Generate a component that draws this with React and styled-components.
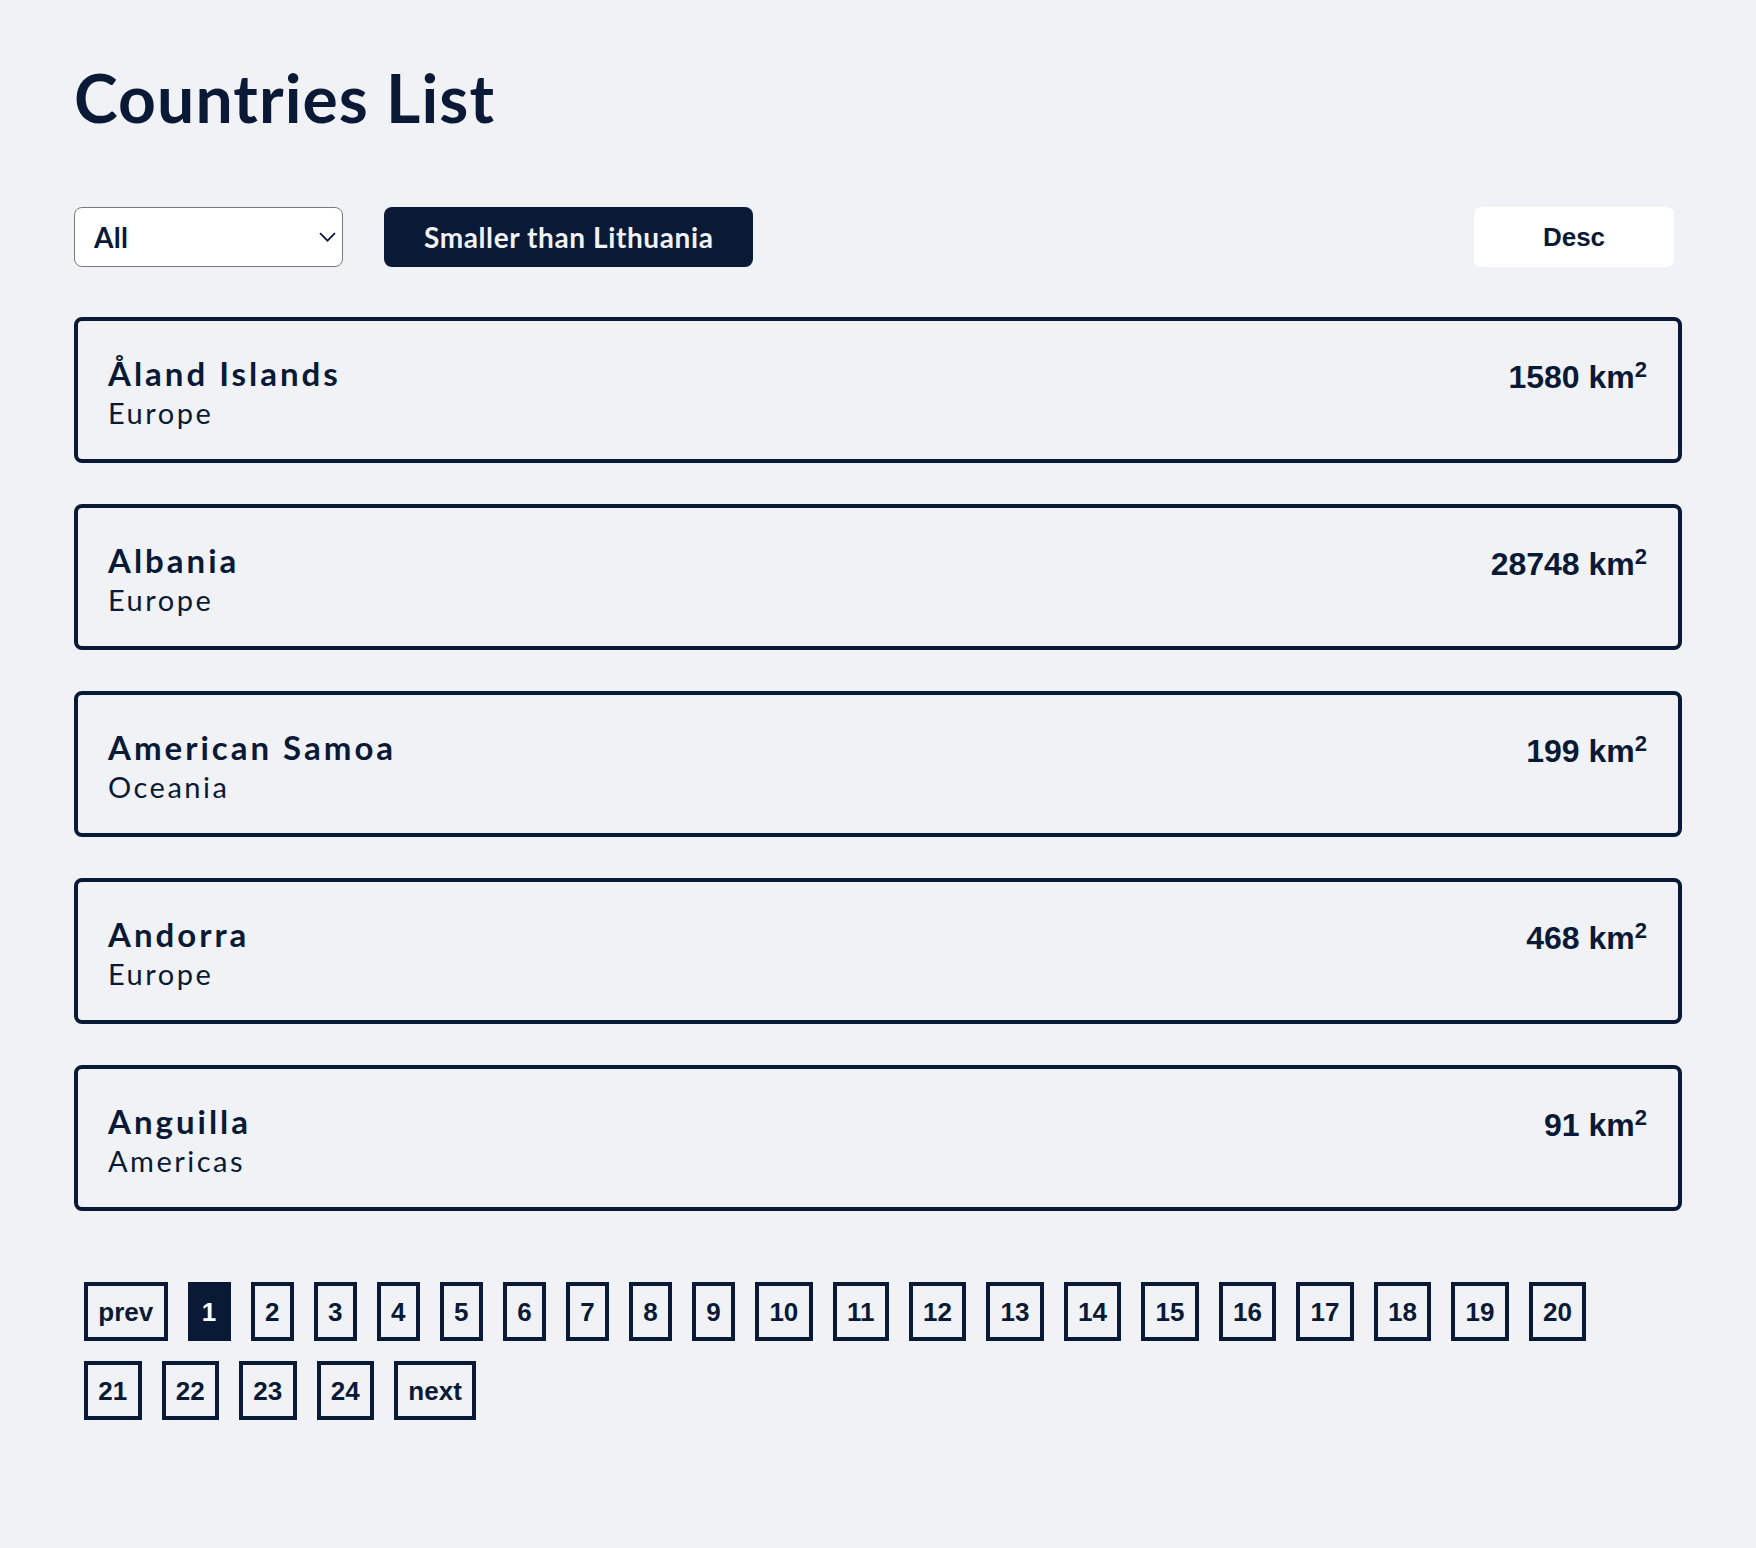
import React from "react";
import styled, { createGlobalStyle } from "styled-components";

const navy = "#0a1a36";
const bg = "#f0f2f5";

const GlobalStyle = createGlobalStyle`
  html, body {
    margin: 0;
    padding: 0;
    background: ${bg};
  }
  body {
    font-family: Lato, "Open Sans", sans-serif;
    color: ${navy};
  }
  * { box-sizing: border-box; }
`;

const Page = styled.main`
  padding: 58px 74px 80px;
`;

const Title = styled.h1`
  margin: 0 0 70px;
  font-family: Lato, sans-serif;
  font-weight: 700;
  font-size: 66px;
  line-height: 1.2;
  letter-spacing: 1.1px;
  color: ${navy};
`;

const Controls = styled.div`
  display: flex;
  align-items: center;
  gap: 41px;
  height: 60px;
  margin-bottom: 50px;
`;

const SelectWrap = styled.div`
  position: relative;
  width: 269px;
  height: 60px;
`;

const Select = styled.select`
  appearance: none;
  -webkit-appearance: none;
  width: 100%;
  height: 100%;
  border: 1.5px solid #7a7a7a;
  border-radius: 8px;
  background: #fff;
  padding: 0 40px 0 19px;
  font-family: Lato, sans-serif;
  font-weight: 700;
  font-size: 28px;
  letter-spacing: 0.3px;
  color: ${navy};
  outline: none;
`;

const Chevron = styled.svg`
  position: absolute;
  right: 7px;
  top: 25px;
  width: 17px;
  height: 10px;
  pointer-events: none;
`;

const PrimaryButton = styled.button`
  height: 60px;
  padding: 0 40px;
  border: none;
  border-radius: 8px;
  background: ${navy};
  color: #f0f2f5;
  font-family: Lato, sans-serif;
  font-weight: 700;
  font-size: 28px;
  letter-spacing: 0.6px;
  cursor: pointer;
`;

const SortButton = styled.button`
  margin-left: auto;
  margin-right: 8px;
  width: 200px;
  height: 60px;
  border: none;
  border-radius: 8px;
  background: #fff;
  color: ${navy};
  font-family: "Liberation Sans", Arial, sans-serif;
  font-weight: 700;
  font-size: 26px;
  cursor: pointer;
`;

const CardList = styled.ul`
  list-style: none;
  margin: 0;
  padding: 0;
  display: flex;
  flex-direction: column;
  gap: 41px;
`;

const Card = styled.li`
  display: flex;
  justify-content: space-between;
  align-items: flex-start;
  border: 4px solid ${navy};
  border-radius: 8px;
  padding: 32px 31px 26px 30px;
`;

const CardInfo = styled.div`
  display: flex;
  flex-direction: column;
`;

const Name = styled.span`
  font-family: Lato, sans-serif;
  font-weight: 700;
  font-size: 33px;
  line-height: 40px;
  letter-spacing: 3px;
`;

const Region = styled.span`
  font-family: Lato, sans-serif;
  font-weight: 400;
  font-size: 29px;
  line-height: 40px;
  letter-spacing: 2.5px;
`;

const Area = styled.span`
  margin-top: 4px;
  font-family: "Liberation Sans", Arial, sans-serif;
  font-weight: 700;
  font-size: 32px;
  line-height: 40px;
`;

const Sup = styled.sup`
  font-size: 22px;
  line-height: 0;
  vertical-align: 11px;
`;

const Pagination = styled.nav`
  display: flex;
  flex-wrap: wrap;
  gap: 20px;
  margin-top: 71px;
  padding: 0 40px 0 10px;
`;

const PageButton = styled.button`
  height: 59px;
  padding: 0 10.3px;
  border: 4px solid ${navy};
  border-radius: 0;
  background: ${(p) => (p.$active ? navy : "transparent")};
  color: ${(p) => (p.$active ? "#ffffff" : navy)};
  font-family: "Liberation Sans", Arial, sans-serif;
  font-weight: 700;
  font-size: 26px;
  line-height: 1;
  cursor: pointer;
`;

const countries = [
  { name: "Åland Islands", region: "Europe", area: 1580 },
  { name: "Albania", region: "Europe", area: 28748 },
  { name: "American Samoa", region: "Oceania", area: 199 },
  { name: "Andorra", region: "Europe", area: 468 },
  { name: "Anguilla", region: "Americas", area: 91 },
];

const pages = Array.from({ length: 24 }, (_, i) => i + 1);

export default function App() {
  return (
    <>
      <GlobalStyle />
      <Page>
        <Title>Countries List</Title>
        <Controls>
          <SelectWrap>
            <Select defaultValue="All">
              <option>All</option>
              <option>Africa</option>
              <option>Americas</option>
              <option>Asia</option>
              <option>Europe</option>
              <option>Oceania</option>
            </Select>
            <Chevron viewBox="0 0 17 10" fill="none">
              <path d="M1 1.2l7.5 7.5 7.5-7.5" stroke={navy} strokeWidth="1.7" />
            </Chevron>
          </SelectWrap>
          <PrimaryButton>Smaller than Lithuania</PrimaryButton>
          <SortButton>Desc</SortButton>
        </Controls>
        <CardList>
          {countries.map((c) => (
            <Card key={c.name}>
              <CardInfo>
                <Name>{c.name}</Name>
                <Region>{c.region}</Region>
              </CardInfo>
              <Area>
                {c.area} km<Sup>2</Sup>
              </Area>
            </Card>
          ))}
        </CardList>
        <Pagination>
          <PageButton>prev</PageButton>
          {pages.map((p) => (
            <PageButton key={p} $active={p === 1}>
              {p}
            </PageButton>
          ))}
          <PageButton>next</PageButton>
        </Pagination>
      </Page>
    </>
  );
}
